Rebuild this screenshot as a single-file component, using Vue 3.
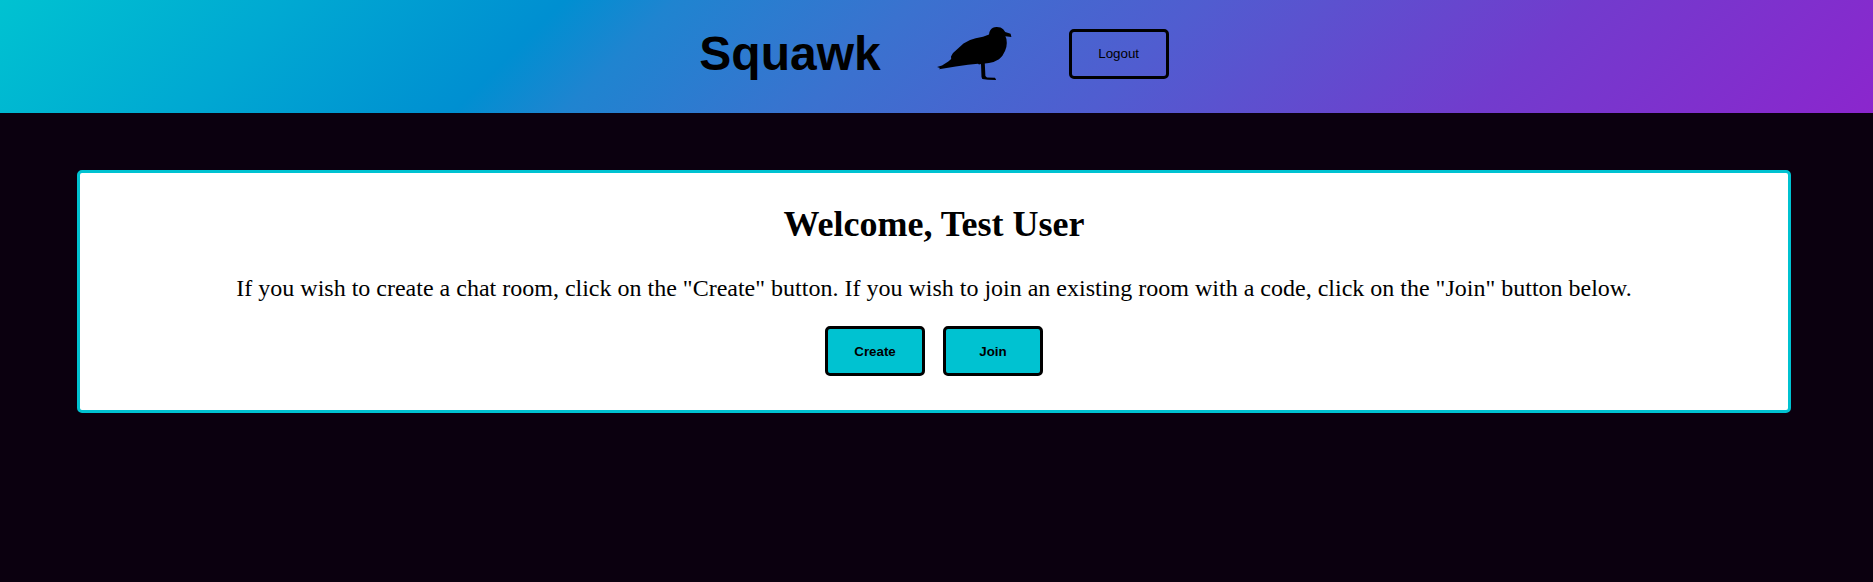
<script setup>
const actions = ['Create', 'Join']
</script>

<template>
  <div class="page">
    <header class="bar">
      <h1 class="brand">Squawk</h1>
      <svg class="bird" viewBox="0 0 76 54" aria-hidden="true">
        <path d="M0 40L5 38.5L11.3 34.5L14.2 32L14 29.5L16 26L21 21.5L26.5 16.5Q31.5 12.7 38.7 11.2L46 9.8L52 7.6Q52 5 53.3 3.2Q55.5 0.2 59.5 0.1Q64 0 66.2 2.2L68.2 4.9L73.6 6.8L74.4 9.9L68.4 9.3Q70 12 69.8 16Q69.8 20 68 24Q66 29 62 32.3Q57 35.5 52 36L47.8 36.6L48.4 49L50 50.4L58 50.8L59.2 52.9L51 52.7L45.3 51.9L44.5 50L44 37L42 37.6L41 36.8L31 37.7L18.7 39.5L2 42.3L3 40.9Z" />
      </svg>
      <button class="btn logout">Logout</button>
    </header>
    <main class="card">
      <h2>Welcome, Test User</h2>
      <p>If you wish to create a chat room, click on the "Create" button. If you wish to join an existing room with a code, click on the "Join" button below.</p>
      <div class="actions">
        <button v-for="a in actions" :key="a" class="btn solid">{{ a }}</button>
      </div>
    </main>
  </div>
</template>

<style>
body { background: #0b000f; }
</style>

<style scoped>
.page { min-height: 582px; overflow: hidden; font-family: "Liberation Serif", serif; color: #000; }
.bar { height: 113px; box-sizing: border-box; padding: 0 5px 6px 0; display: flex; justify-content: center; align-items: center; background: linear-gradient(135deg, #00c2d1 0%, #00a8d2 15%, #008fd1 28.5%, #1f84d0 34%, #3a72cf 46%, #505dd0 60.5%, #723bcd 80%, #8b26cd 100%); }
.brand { margin: 0 56px 0 0; font: bold 48px/56px "Liberation Sans", sans-serif; }
.bird { width: 76px; height: 54px; margin-right: 56px; }
.btn { box-sizing: border-box; width: 100px; height: 50px; padding: 0; border: 3px solid #000; border-radius: 5px; font: 13.333px "Liberation Sans", sans-serif; color: #000; background: transparent; }
.card { box-sizing: border-box; width: 1714px; height: 243px; margin: 57px 0 0 77px; border: 3px solid #00c2d1; border-radius: 5px; background: #fff; text-align: center; }
h2 { margin: 30px 0 0; font-size: 36px; line-height: 42px; }
p { margin: 29px 0 0; font-size: 24px; line-height: 28px; }
.actions { display: flex; justify-content: center; gap: 18px; margin-top: 24px; }
.solid { background: #00c2d1; font-weight: bold; }
</style>
